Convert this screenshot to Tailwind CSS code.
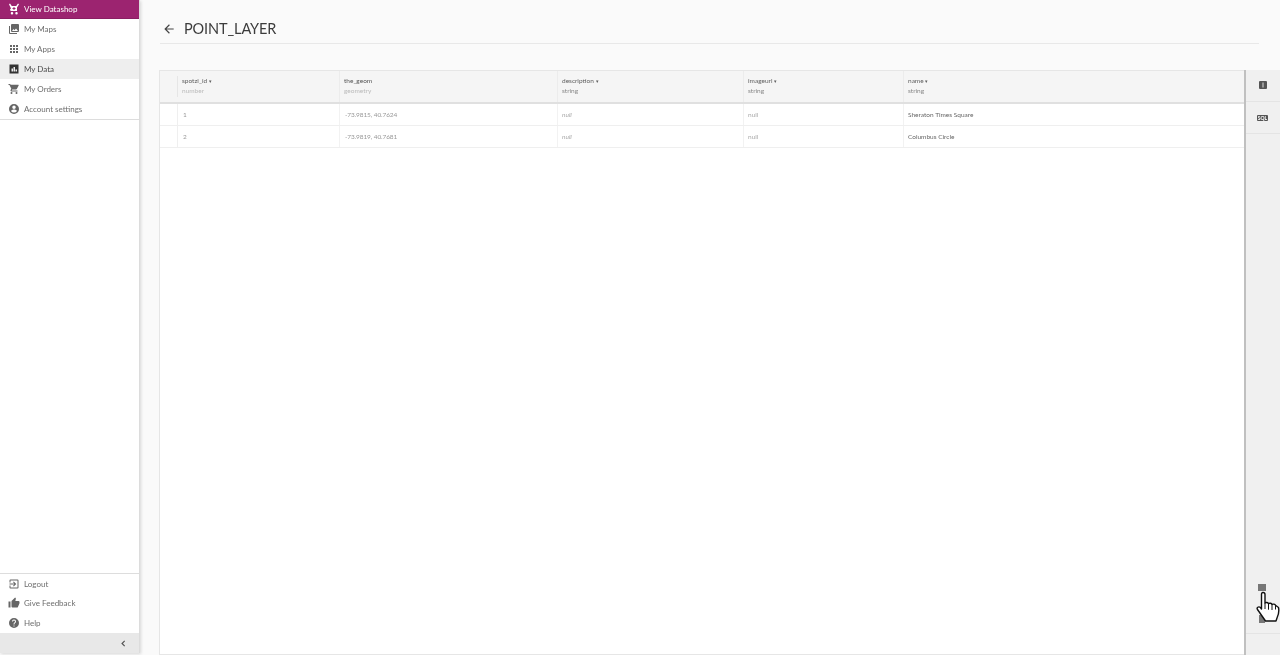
<!doctype html>
<html><head><meta charset="utf-8"><script src="https://cdn.jsdelivr.net/npm/@tailwindcss/browser@4"></script></head>
<body class="m-0 overflow-hidden bg-[#fafafa]">
<div class="flex h-[655px] w-[1280px] overflow-hidden bg-[#fafafa] font-['Lato',sans-serif] relative blur-[0.45px]">
  <aside class="w-[140px] h-[653px] flex flex-col bg-white border-r border-[#dcdcdc] shadow-[1px_1px_3px_rgba(0,0,0,0.14)] shrink-0 text-[8px] text-[#6e6e6e]">
    <div class="flex items-center h-[19px] bg-[#9c2470] border-b border-[#8a1f63] text-white pl-[8px] gap-[4px]">
      <svg class="w-[12px] h-[12px]" viewBox="0 0 24 24" fill="#fff"><path d="M4 1l3.500 5h9L20 1l2 1.500-4 6.500v7H7a3 3 0 0 1-3-3l2-2-4-8.500L4 1zM8 18a2.500 2.500 0 1 0 0 5 2.500 2.500 0 0 0 0-5zm9 0a2.500 2.500 0 1 0 0 5 2.500 2.500 0 0 0 0-5zM11 8v2H9v2h2v2h2v-2h2v-2h-2V8z" fill-rule="evenodd"/></svg>
      <span>View Datashop</span>
    </div>
    <div class="flex items-center h-[20px] pl-[8px] gap-[4px]">
      <svg class="w-[12px] h-[12px]" viewBox="0 0 24 24" fill="#666"><path d="M22 16V4a2 2 0 0 0-2-2H8a2 2 0 0 0-2 2v12a2 2 0 0 0 2 2h12a2 2 0 0 0 2-2zm-11-4 2 2.700 3-3.700 4 5H8l3-4zM2 6v14a2 2 0 0 0 2 2h14v-2H4V6H2z"/></svg>
      <span>My Maps</span>
    </div>
    <div class="flex items-center h-[20px] pl-[8px] gap-[4px]">
      <svg class="w-[12px] h-[12px]" viewBox="0 0 24 24" fill="#666"><path d="M4 8h4V4H4v4zm6 12h4v-4h-4v4zm-6 0h4v-4H4v4zm0-6h4v-4H4v4zm6 0h4v-4h-4v4zm6-10v4h4V4h-4zm-6 4h4V4h-4v4zm6 6h4v-4h-4v4zm0 6h4v-4h-4v4z"/></svg>
      <span>My Apps</span>
    </div>
    <div class="flex items-center h-[20px] pl-[8px] gap-[4px] bg-[#eeeeee] text-[#4a4a4a]">
      <svg class="w-[12px] h-[12px]" viewBox="0 0 24 24" fill="#333"><path fill-rule="evenodd" d="M3 3h18v18H3V3zm4 14h3v-6H7v6zm4 0h3V8h-3v9zm4 0h3v-4h-3v4z"/></svg>
      <span>My Data</span>
    </div>
    <div class="flex items-center h-[20px] pl-[8px] gap-[4px]">
      <svg class="w-[12px] h-[12px]" viewBox="0 0 24 24" fill="#666"><path d="M7 18a2 2 0 1 0 0 4 2 2 0 0 0 0-4zM1 2v2h2l3.600 7.600-1.400 2.400c-.7 1.300.3 3 1.800 3h12v-2H7.400l1.100-2h7.500c.7 0 1.400-.4 1.700-1L21.300 5c.4-.7-.1-1.500-.9-1.500H5.200L4.300 2H1zm16 16a2 2 0 1 0 0 4 2 2 0 0 0 0-4z"/></svg>
      <span>My Orders</span>
    </div>
    <div class="flex items-center h-[20px] pl-[8px] gap-[4px]">
      <svg class="w-[12px] h-[12px]" viewBox="0 0 24 24" fill="#666"><path d="M12 2a10 10 0 1 0 0 20 10 10 0 0 0 0-20zm0 3a3.500 3.500 0 1 1 0 7 3.500 3.500 0 0 1 0-7zm0 14.200a7.200 7.200 0 0 1-6-3.200c0-2 4-3.100 6-3.100s6 1.100 6 3.100a7.200 7.200 0 0 1-6 3.200z"/></svg>
      <span>Account settings</span>
    </div>
    <div class="border-b border-[#dddddd]"></div>
    <div class="flex-1"></div>
    <div class="border-b border-[#dddddd]"></div>
    <div class="flex items-center h-[19px] pl-[8px] gap-[4px]">
      <svg class="w-[12px] h-[12px]" viewBox="0 0 24 24" fill="#666"><path d="M10.100 15.600 11.500 17l5-5-5-5-1.400 1.400 2.600 2.600H3v2h9.700l-2.600 2.600zM19 3H5a2 2 0 0 0-2 2v4h2V5h14v14H5v-4H3v4a2 2 0 0 0 2 2h14a2 2 0 0 0 2-2V5a2 2 0 0 0-2-2z"/></svg>
      <span>Logout</span>
    </div>
    <div class="flex items-center h-[20px] pl-[8px] gap-[4px]">
      <svg class="w-[12px] h-[12px]" viewBox="0 0 24 24" fill="#666"><path d="M1 21h4V9H1v12zm22-11a2 2 0 0 0-2-2h-6.300l1-4.600v-.3c0-.4-.2-.8-.4-1.100L14.200 1 7.600 7.600C7.200 8 7 8.500 7 9v10a2 2 0 0 0 2 2h9c.8 0 1.500-.5 1.800-1.200l3-7c.1-.2.200-.5.200-.8v-2z"/></svg>
      <span>Give Feedback</span>
    </div>
    <div class="flex items-center h-[20px] pl-[8px] gap-[4px]">
      <svg class="w-[12px] h-[12px]" viewBox="0 0 24 24" fill="#666"><path d="M12 2a10 10 0 1 0 0 20 10 10 0 0 0 0-20zm1 17h-2v-2h2v2zm2.100-7.700-.9.900c-.7.700-1.200 1.300-1.200 2.800h-2v-.5c0-1.100.5-2.100 1.200-2.800l1.200-1.300c.4-.3.600-.8.600-1.400a2 2 0 0 0-4 0H8a4 4 0 0 1 8 0c0 .9-.4 1.700-.9 2.300z"/></svg>
      <span>Help</span>
    </div>
    <div class="flex items-center justify-end h-[20px] bg-[#e8e8e8] pr-[12px]">
      <svg class="w-[7px] h-[7px]" viewBox="0 0 24 24" fill="none" stroke="#555" stroke-width="4"><path d="M16 3l-9 9 9 9"/></svg>
    </div>
  </aside>

  <main class="flex-1 flex flex-col min-w-0">
    <div class="flex items-center h-[44px] ml-[20px] mr-[21px] border-b border-[#e8e8e8] pt-[14px] gap-[8px] text-[#333]">
      <svg class="w-[14px] h-[14px] ml-[2px]" viewBox="0 0 24 24" fill="#444"><path d="M20 11H7.800l5.600-5.600L12 4l-8 8 8 8 1.400-1.400L7.800 13H20z"/></svg>
      <span class="text-[14.500px] tracking-[-0.1px] text-[#3c3c3c] mt-[1px]">POINT_LAYER</span>
    </div>
    <div class="flex flex-1 mt-[26px] ml-[19px] min-h-0">
      <div class="flex-1 min-w-0 bg-white border-l border-b border-[#e6e6e6] text-[6.500px]">
        <div class="flex h-[34px] bg-[#f5f5f5] border-t border-[#e6e6e6] border-b-2 border-b-[#e0e0e0] text-[#5e5e5e]">
          <div class="w-[18px] shrink-0 my-[5px] border-r border-[#e6e6e6]"></div>
          <div class="w-[161px] shrink-0 pl-[4px] pt-[5px] leading-[10px]"><div>spotzi_id <span class="text-[5px]">▾</span></div><div class="text-[#bbb]">number</div></div>
          <div class="w-[218px] shrink-0 pl-[4px] pt-[5px] leading-[10px] border-l border-[#ececec]"><div class="text-[#555]">the_geom</div><div class="text-[#bbb]">geometry</div></div>
          <div class="w-[186px] shrink-0 pl-[4px] pt-[5px] leading-[10px] border-l border-[#ececec]"><div>description <span class="text-[5px]">▾</span></div><div class="text-[#888]">string</div></div>
          <div class="w-[160px] shrink-0 pl-[4px] pt-[5px] leading-[10px] border-l border-[#ececec]"><div>imageurl <span class="text-[5px]">▾</span></div><div class="text-[#888]">string</div></div>
          <div class="flex-1 pl-[4px] pt-[5px] leading-[10px] border-l border-[#ececec]"><div>name <span class="text-[5px]">▾</span></div><div class="text-[#888]">string</div></div>
        </div>
        <div class="flex h-[22px] items-center border-b border-[#efefef]">
          <div class="w-[18px] h-full shrink-0 border-r border-[#efefef]"></div>
          <div class="w-[161px] shrink-0 pl-[5px] text-[#999]">1</div>
          <div class="w-[218px] h-full flex items-center shrink-0 pl-[5px] border-l border-[#f2f2f2] text-[#999] tracking-[-0.1px]">-73.9815, 40.7624</div>
          <div class="w-[186px] h-full flex items-center shrink-0 pl-[4px] border-l border-[#f2f2f2] text-[#aaa] italic">null</div>
          <div class="w-[160px] h-full flex items-center shrink-0 pl-[4px] border-l border-[#f2f2f2] text-[#aaa]">null</div>
          <div class="flex-1 h-full flex items-center pl-[4px] border-l border-[#f2f2f2] text-[#666]">Sheraton Times Square</div>
        </div>
        <div class="flex h-[22px] items-center border-b border-[#efefef]">
          <div class="w-[18px] h-full shrink-0 border-r border-[#efefef]"></div>
          <div class="w-[161px] shrink-0 pl-[5px] text-[#999]">2</div>
          <div class="w-[218px] h-full flex items-center shrink-0 pl-[5px] border-l border-[#f2f2f2] text-[#999] tracking-[-0.1px]">-73.9819, 40.7681</div>
          <div class="w-[186px] h-full flex items-center shrink-0 pl-[4px] border-l border-[#f2f2f2] text-[#aaa] italic">null</div>
          <div class="w-[160px] h-full flex items-center shrink-0 pl-[4px] border-l border-[#f2f2f2] text-[#aaa]">null</div>
          <div class="flex-1 h-full flex items-center pl-[4px] border-l border-[#f2f2f2] text-[#666]">Columbus Circle</div>
        </div>
      </div>
      <div class="w-[36px] shrink-0 flex flex-col bg-[#f0f0f0] border-l-2 border-[#c0c0c0]">
        <div class="h-[32px] flex items-center justify-center border-b border-[#e4e4e4] pr-[1px] pb-[2px]"><svg class="w-[8px] h-[8px]" viewBox="0 0 8 8"><rect width="8" height="8" rx="1" fill="#555"/><rect x="3.500" y="1.500" width="1" height="5" fill="#ddd"/></svg></div>
        <div class="h-[32px] flex items-center justify-center border-b border-[#e4e4e4] pr-[1px]"><span class="bg-[#555] text-white rounded-[1px] text-[5px] leading-[6px] px-[1px] font-bold">SQL</span></div>
        <div class="flex-1"></div>
        <div class="h-[53px] flex flex-col items-center gap-[24px] pt-[4px] pr-[3px]"><div class="w-[8px] h-[7px] bg-[#777]"></div><div class="w-[6px] h-[8px] bg-[#777]"></div></div>
        <div class="h-[22px] border-t border-[#e4e4e4]"></div>
      </div>
    </div>
  </main>
  <svg class="absolute left-[1256px] top-[591px] w-[24px] h-[32px]" viewBox="0 0 24 32"><path d="M7 1.500c1.200 0 2 .8 2 2V12c1-.8 3-.6 3.500.7 1-.8 3-.6 3.500.8 1-.7 3-.5 3.500.8l3 2.200c.6 3 .2 7-1.500 10.500l-1 3H9.500L1.500 18.500c-1.200-1.800 1-3.500 3-2L5.500 18V3.500c0-1.200.3-2 1.500-2z" fill="#fff" stroke="#111" stroke-width="1.400" stroke-linejoin="round"/><path d="M9 12v6M12.500 12.700v6M16 13.500v5.500M19.500 14.500v4" stroke="#111" stroke-width="1"/></svg>
</div>
</body></html>
